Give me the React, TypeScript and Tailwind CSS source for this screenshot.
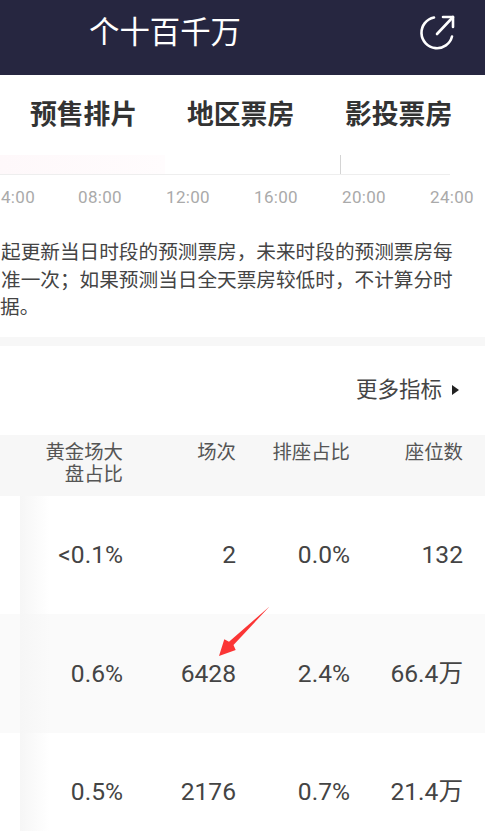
import React from "react";

const cjk = "font-['Roboto','Noto_Sans_CJK_SC',sans-serif]";

const hours = ["08:00", "12:00", "16:00", "20:00", "24:00"];

const rows = [
  { gold: "<0.1%", shows: "2", seat: "0.0%", total: "132", bg: "bg-white" },
  { gold: "0.6%", shows: "6428", seat: "2.4%", total: "66.4万", bg: "bg-[#fafafa]" },
  { gold: "0.5%", shows: "2176", seat: "0.7%", total: "21.4万", bg: "bg-white" },
];

const App: React.FC = () => {
  return (
    <div className={`relative h-[831px] w-[485px] overflow-hidden bg-white ${cjk}`}>

      {/* Header */}
      <div className="flex h-[75px] items-center justify-between bg-[#262640] pb-[9px] pl-[89px] pr-[29px]">
        <h1 className="text-[30.4px] font-normal leading-none text-white">个十百千万</h1>
        <svg width="38" height="38" viewBox="0 0 38 38" fill="none" stroke="white" strokeWidth="2.6" strokeLinecap="round" strokeLinejoin="round">
          <path d="M16 3.5 A15.5 15.5 0 1 0 34 22.5" />
          <path d="M19 20 L35 3" />
          <path d="M25 3 L35 3 L35 13" />
        </svg>
      </div>

      {/* Tabs */}
      <div className="flex h-[80px] items-center whitespace-nowrap pl-[30px] text-[26.8px] font-bold text-[#333333]">
        <span className="w-[157px]">预售排片</span>
        <span className="w-[158px]">地区票房</span>
        <span>影投票房</span>
      </div>

      {/* Chart */}
      <div className="flex h-[20px] w-[450px] border-b border-[#eeeeee]">
        <div className="h-full w-[165px] bg-gradient-to-r from-[#fef8fa] to-[#fffcfd]" />
        <div className="ml-[175px] h-full w-px bg-[#d4d4d4]" />
      </div>
      <div className="mt-[11px] flex text-[17px] leading-[22px] tracking-[0.3px] text-[#aaaaaa]">
        <span className="w-[56px] shrink-0 pl-[1px]">4:00</span>
        {hours.map((h) => (
          <span key={h} className="w-[88px] shrink-0 text-center">{h}</span>
        ))}
      </div>

      {/* Note */}
      <div className="mt-[31px] whitespace-nowrap pl-[1px] text-[19.65px] leading-[27.5px] text-[#444444]">
        <p>起更新当日时段的预测票房，未来时段的预测票房每</p>
        <p>准一次；如果预测当日全天票房较低时，不计算分时</p>
        <p className="-ml-[1px]">据。</p>
      </div>
      <div className="mt-[15px] h-[9px] bg-[#f7f7f7]" />

      {/* More */}
      <div className="flex h-[89px] items-center justify-end gap-[10px] pr-[26px] text-[21.5px] text-[#444444]">
        <span>更多指标</span>
        <span className="h-0 w-0 border-y-[5px] border-l-[7px] border-y-transparent border-l-[#222222]" />
      </div>

      {/* Table */}
      <div className="grid h-[61px] grid-cols-[123px_113px_114px_113px] bg-[#f7f7f7] pt-[7px] text-right text-[19.4px] leading-[22px] text-[#555555]">
        <span>黄金场大<br />盘占比</span>
        <span>场次</span>
        <span>排座占比</span>
        <span>座位数</span>
      </div>
      <div className="relative">
        {rows.map((r) => (
          <div key={r.shows} className={`grid h-[118.5px] grid-cols-[123px_113px_114px_113px] items-center pt-[2px] text-right text-[24.6px] text-[#444444] ${r.bg}`}>
            <span>{r.gold}</span>
            <span>{r.shows}</span>
            <span>{r.seat}</span>
            <span>{r.total}</span>
          </div>
        ))}
        {/* frozen column shadow */}
        <div className="absolute bottom-0 left-[20px] top-0 w-[30px] bg-gradient-to-r from-[#f6f6f6] to-transparent" />
      </div>

      {/* Red annotation arrow */}
      <svg className="absolute left-[219px] top-[606px]" width="51" height="51" viewBox="0 0 51 51">
        <path d="M50.5 0.5 L14.5 39 L16.7 44 L0 50 L5.3 33.3 L10 35.7 Z" fill="#fb3535" />
      </svg>
    </div>
  );
};

export default App;
